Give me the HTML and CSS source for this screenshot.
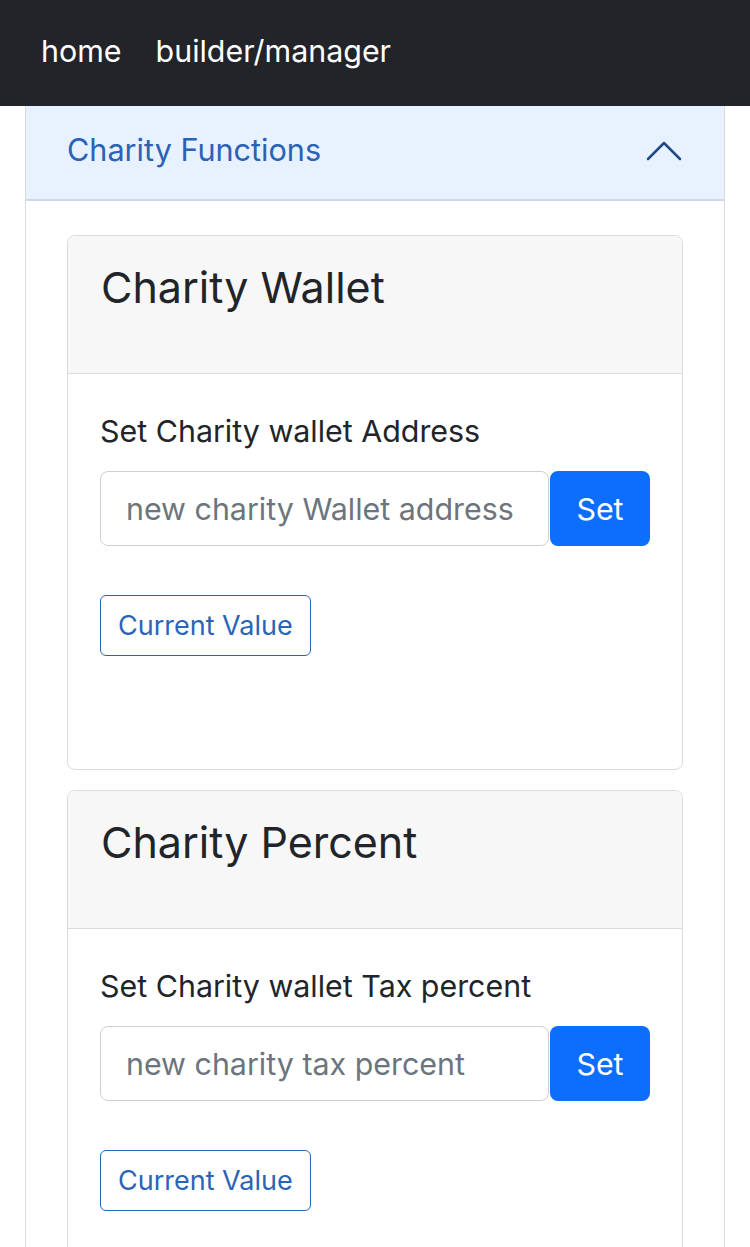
FILE: index.html
```html
<!DOCTYPE html>
<html lang="en">
<head>
<meta charset="utf-8">
<title>builder/manager</title>
<link rel="stylesheet" href="styles.css">
</head>
<body>
<nav class="navbar">
  <a class="nav-link" href="#">home</a>
  <a class="nav-link" href="#">builder/manager</a>
</nav>
<div class="accordion">
  <div class="acc-item">
    <h2 class="acc-header">
      <button class="acc-button" type="button">
        <span>Charity Functions</span>
        <svg class="chevron" width="36" height="20" viewBox="0 0 36 20"><polyline points="2,18 18,2 34,18" fill="none" stroke="#1f4a86" stroke-width="2.5" stroke-linecap="round" stroke-linejoin="round"/></svg>
      </button>
    </h2>
    <div class="acc-body">
      <div class="card">
        <div class="card-header"><h3 class="card-title">Charity Wallet</h3></div>
        <div class="card-body">
          <label class="form-label">Set Charity wallet Address</label>
          <div class="input-group">
            <input class="form-control" type="text" placeholder="new charity Wallet address">
            <button class="btn-set" type="button">Set</button>
          </div>
          <button class="btn-outline" type="button">Current Value</button>
        </div>
      </div>
      <div class="card">
        <div class="card-header"><h3 class="card-title">Charity Percent</h3></div>
        <div class="card-body">
          <label class="form-label">Set Charity wallet Tax percent</label>
          <div class="input-group">
            <input class="form-control" type="text" placeholder="new charity tax percent">
            <button class="btn-set" type="button">Set</button>
          </div>
          <button class="btn-outline" type="button">Current Value</button>
        </div>
      </div>
    </div>
  </div>
</div>
</body>
</html>
```
FILE: styles.css
```css
* { box-sizing: border-box; }
html, body { margin: 0; padding: 0; background: #fff; }
body {
  font-family: Inter, "Noto Sans", sans-serif;
  color: #212529;
  overflow: hidden;
}
.navbar {
  height: 106px;
  background: #222429;
  display: flex;
  align-items: center;
  padding: 0 0 4px 41px;
  gap: 34px;
}
.nav-link {
  color: #fff;
  text-decoration: none;
  font-size: 30.4px;
  line-height: 1;
}
.accordion {
  margin: 0 25px;
  border-left: 1px solid #dcdcdc;
  border-right: 1px solid #dcdcdc;
  min-height: 1141px;
}
.acc-header { margin: 0; }
.acc-button {
  width: 100%;
  height: 95px;
  border: 0;
  background: #e7f1ff;
  box-shadow: inset 0 -2px 0 #cfd8e4;
  display: flex;
  align-items: center;
  justify-content: space-between;
  padding: 0 42px 8px 41px;
  font-family: inherit;
  font-size: 30.6px;
  color: #2a62b5;
  text-align: left;
}
.chevron { display: block; margin-top: 2px; }
.acc-body { padding: 34px 41px 0 41px; }
.card {
  border: 1px solid #dcdcdc;
  border-radius: 8px;
  overflow: hidden;
  margin-bottom: 20px;
}
.card-header {
  height: 138px;
  background: #f7f7f7;
  border-bottom: 1px solid #dcdcdc;
  padding: 25px 33px 0 33px;
}
.card-title {
  margin: 0;
  font-size: 43px;
  font-weight: 400;
  line-height: 52px;
}
.card-body { padding: 38px 32px 113px 32px; }
.form-label {
  display: block;
  font-size: 30.4px;
  line-height: 38px;
  margin-bottom: 21px;
}
.input-group {
  display: flex;
  gap: 1px;
  height: 75px;
}
.form-control {
  flex: 1;
  min-width: 0;
  height: 75px;
  border: 1px solid #cfcfcf;
  border-radius: 8px;
  padding: 0 25px;
  font-family: inherit;
  font-size: 30.4px;
  color: #212529;
  outline: none;
}
.form-control::placeholder { color: #6c757d; }
.btn-set {
  width: 100px;
  height: 75px;
  border: 0;
  border-radius: 8px;
  background: #0d6efd;
  color: #fff;
  font-family: inherit;
  font-size: 30.4px;
}
.btn-outline {
  display: block;
  margin-top: 49px;
  height: 61px;
  padding: 0 17px;
  border: 1.5px solid #2a64b8;
  border-radius: 6px;
  background: #fff;
  color: #2a64b8;
  font-family: inherit;
  font-size: 27px;
}
```
